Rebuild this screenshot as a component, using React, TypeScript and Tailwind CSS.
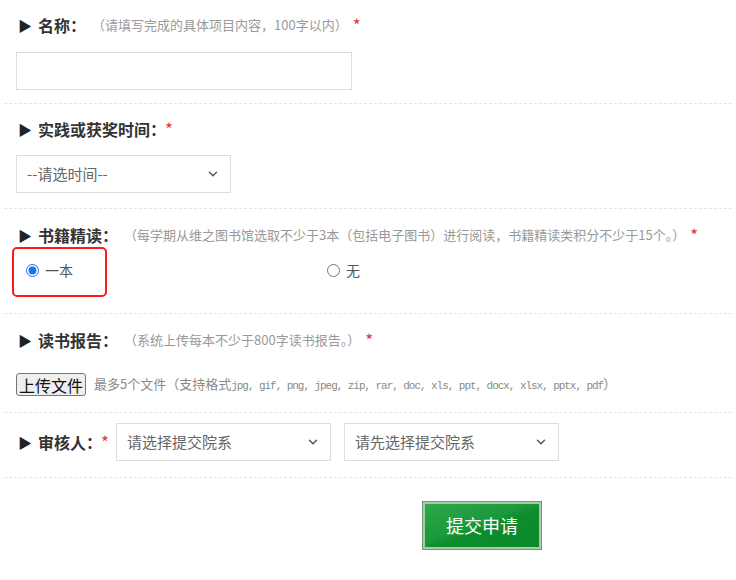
import { ChevronDown } from 'lucide-react';

const FONT = { fontFamily: '"Noto Sans CJK SC", "Noto Sans", sans-serif' };

function Label({ text, hint, star = true }: { text: string; hint?: string; star?: boolean }) {
  return (
    <div className="flex items-center h-[24px]">
      <span className="text-[14px] text-[#222] w-[22px] pl-[2px] leading-none">▶</span>
      <span className="text-[16px] font-bold text-[#333]">{text}</span>
      <span className="text-[16px] font-bold text-[#333] inline-block w-[12px] overflow-visible">：</span>
      {hint && <span className="text-[13px] text-[#999] ml-[10px]">{hint}</span>}
      {star && <span className={`text-[17px] text-[#e4393c] ${hint ? 'ml-[5px]' : 'ml-[3px]'}`}>*</span>}
    </div>
  );
}

function FakeSelect({ text, w }: { text: string; w: string }) {
  return (
    <div className={`${w} h-[38px] border border-[#ddd] bg-white flex items-center justify-between pl-[10px] pr-[10px]`}>
      <span className="text-[15px] text-[#666]">{text}</span>
      <ChevronDown className="w-[14px] h-[14px] text-[#555]" strokeWidth={2.5} />
    </div>
  );
}

export default function App() {
  return (
    <div className="w-[736px] h-[580px] bg-white px-[4px]" style={FONT}>
      <div className="h-[104px] border-b border-dashed border-[#e5e5e5] pt-[13px] pl-[12px]">
        <Label text="名称" hint="（请填写完成的具体项目内容，100字以内）" />
        <div className="mt-[15px] w-[336px] h-[38px] border border-[#ddd]" />
      </div>

      <div className="h-[105px] border-b border-dashed border-[#e5e5e5] pt-[13px] pl-[12px]">
        <Label text="实践或获奖时间" />
        <div className="mt-[14px]">
          <FakeSelect text="--请选时间--" w="w-[215px]" />
        </div>
      </div>

      <div className="h-[105px] border-b border-dashed border-[#e5e5e5] pt-[14px] pl-[12px]">
        <Label text="书籍精读" hint="（每学期从维之图书馆选取不少于3本（包括电子图书）进行阅读，书籍精读类积分不少于15个。）" />
        <div className="flex items-start">
          <div className="-ml-[4px] w-[95px] h-[50px] border-2 border-[#ff1a1a] rounded-[5px] flex items-start pt-[11px] pl-[12px]">
            <label className="flex items-center gap-[6px]">
              <input type="radio" name="book" defaultChecked className="w-[13px] h-[13px] m-0 accent-[#1a73e8]" />
              <span className="text-[14px] text-[#555]">一本</span>
            </label>
          </div>
          <label className="flex items-center gap-[6px] ml-[220px] mt-[13px]">
            <input type="radio" name="book" className="w-[13px] h-[13px] m-0" />
            <span className="text-[14px] text-[#555]">无</span>
          </label>
        </div>
      </div>

      <div className="h-[99px] border-b border-dashed border-[#e5e5e5] pt-[14px] pl-[12px]">
        <Label text="读书报告" hint="（系统上传每本不少于800字读书报告。）" />
        <div className="flex items-center mt-[21px]">
          <button className="h-[23px] px-[2px] border border-[#767676] rounded-[3px] bg-[#efefef] text-[16px] text-[#111] leading-none">上传文件</button>
          <span className="ml-[8px] text-[13px] text-[#8a8a8a]">
            最多5个文件（支持格式
            <span className="text-[11px] tracking-[-1.05px]" style={{ fontFamily: '"Liberation Mono", monospace' }}>
              jpg, gif, png, jpeg, zip, rar, doc, xls, ppt, docx, xlsx, pptx, pdf
            </span>
            ）
          </span>
        </div>
      </div>

      <div className="h-[65px] border-b border-dashed border-[#e5e5e5] pl-[12px] pb-[6px] flex items-center">
        <Label text="审核人" />
        <div className="ml-[7px]">
          <FakeSelect text="请选择提交院系" w="w-[215px]" />
        </div>
        <div className="ml-[13px]">
          <FakeSelect text="请先选择提交院系" w="w-[215px]" />
        </div>
      </div>

      <div className="flex pl-[419px] pt-[24px]">
        <button className="w-[118px] h-[47px] border-2 border-[#a9cba9] bg-[linear-gradient(160deg,#2ea84a_0%,#1a9a3a_45%,#0f8c2e_55%,#0b8a2a_100%)] text-white text-[18px] shadow-[0_0_0_1px_#6a9a6a]">
          提交申请
        </button>
      </div>
    </div>
  );
}
